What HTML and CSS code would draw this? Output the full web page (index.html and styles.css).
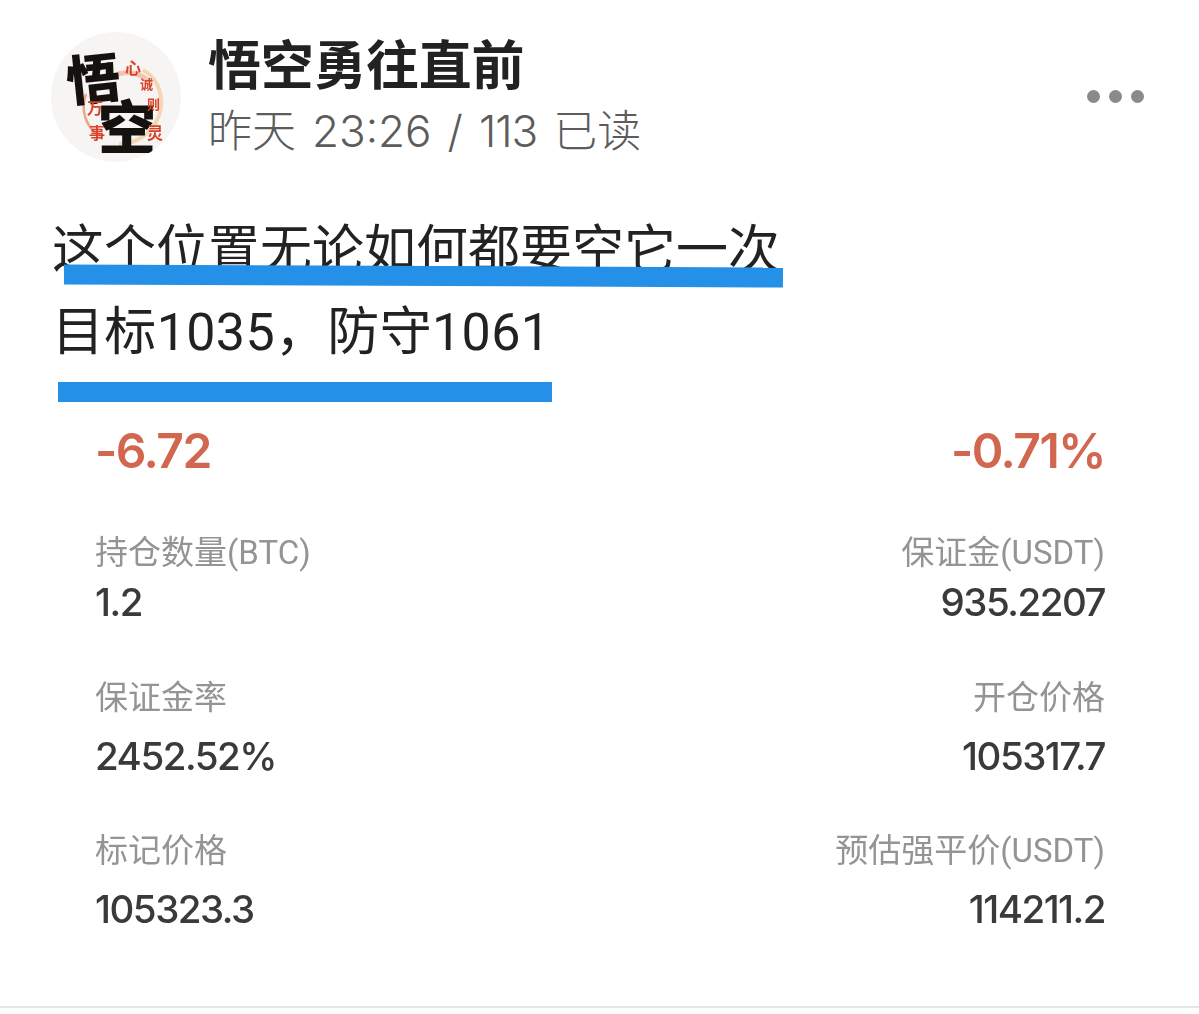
FILE: index.html
```html
<!DOCTYPE html>
<html lang="zh">
<head>
<meta charset="utf-8">
<title>悟空勇往直前</title>
<link rel="stylesheet" href="styles.css">
</head>
<body>
<main class="post">
  <header class="head">
    <div class="avatar">
      <svg class="swirl" viewBox="0 0 130 130" aria-hidden="true">
        <path d="M92 38c18 10 24 34 12 54-8 13-22 20-36 20" fill="none" stroke="#f3d6b8" stroke-width="4"/>
        <path d="M35 62c-6 16 0 34 14 42" fill="none" stroke="#efa585" stroke-width="2.5"/>
        <path d="M62 44c14-6 28-4 38 8" fill="none" stroke="#f5c4b0" stroke-width="5"/>
      </svg>
      <span class="av-wu">悟</span>
      <span class="av-kong">空</span>
      <span class="av-red av-xin">心</span>
      <span class="av-red av-small av-cheng">诚</span>
      <span class="av-red av-small av-ze">则</span>
      <span class="av-red av-ling">灵</span>
      <span class="av-red av-wan">万</span>
      <span class="av-red av-shi">事</span>
    </div>
    <div class="who">
      <div class="name">悟空勇往直前</div>
      <div class="meta"><span>昨天</span><span>23:26</span><span>/</span><span class="reads">113</span><span>已读</span></div>
    </div>
    <div class="more" aria-label="更多"><i></i><i></i><i></i></div>
  </header>

  <section class="body">
    <p class="line line-one">这个位置无论如何都要空它一次<span class="mark mark-one"></span></p>
    <p class="line line-two">目标1035，防守1061<span class="mark mark-two"></span></p>
  </section>

  <section class="card">
    <div class="pnl">
      <span>-6.72</span>
      <span>-0.71%</span>
    </div>
    <div class="row row-a">
      <div class="cell"><div class="label">持仓数量(BTC)</div><div class="value">1.2</div></div>
      <div class="cell end"><div class="label">保证金(USDT)</div><div class="value">935.2207</div></div>
    </div>
    <div class="row row-b">
      <div class="cell"><div class="label">保证金率</div><div class="value">2452.52%</div></div>
      <div class="cell end"><div class="label">开仓价格</div><div class="value">105317.7</div></div>
    </div>
    <div class="row row-c">
      <div class="cell"><div class="label">标记价格</div><div class="value">105323.3</div></div>
      <div class="cell end"><div class="label">预估强平价(USDT)</div><div class="value">114211.2</div></div>
    </div>
  </section>
  <div class="rule"></div>
</main>
</body>
</html>
```
FILE: styles.css
```css
* { box-sizing: border-box; }
html, body { margin: 0; background: #fff; }
body {
  width: 1199px;
  height: 1014px;
  overflow: hidden;
  font-family: Inter, "Noto Sans CJK SC", sans-serif;
  color: #222;
}
.post { display: flex; flex-direction: column; height: 1014px; }

.head { display: flex; align-items: flex-start; padding: 30px 55px 0 51px; }
.avatar {
  position: relative;
  flex: none;
  width: 130px;
  height: 130px;
  margin-top: 2px;
  border-radius: 50%;
  background: #f6f5f4;
  overflow: hidden;
  filter: blur(.5px);
}
.swirl { position: absolute; inset: 0; width: 130px; height: 130px; }
.avatar span { position: absolute; line-height: 1; font-family: "Noto Sans CJK SC", sans-serif; }
.av-wu { left: 15px; top: 17px; font-size: 54px; font-weight: 900; color: #15110f; transform: rotate(-6deg); }
.av-kong { left: 47px; top: 63px; font-size: 58px; font-weight: 900; color: #15110f; }
.av-red { font-size: 16px; font-weight: 700; color: #d8432a; }
.av-small { font-size: 13px; }
.av-xin { left: 74px; top: 27px; }
.av-cheng { left: 89px; top: 45px; }
.av-ze { left: 96px; top: 65px; }
.av-ling { left: 96px; top: 92px; }
.av-wan { left: 36px; top: 67px; }
.av-shi { left: 38px; top: 92px; }

.who { margin-left: 27px; flex: 1; }
.name { font-size: 53px; line-height: 64px; font-weight: 700; letter-spacing: -.3px; color: #222; font-family: "Noto Sans CJK SC", sans-serif; }
.meta { display: flex; gap: 16px; margin-top: 5px; font-size: 44px; line-height: 64px; font-weight: 300; color: #5c5c5c; white-space: nowrap; }
.reads { letter-spacing: -1px; }
.more { display: flex; gap: 9px; margin-top: 60px; }
.more i { width: 13px; height: 13px; border-radius: 50%; background: #8a8a8a; }

.body { padding: 43px 0 0 52px; }
.line { position: relative; margin: 0; font-size: 52px; line-height: 87px; white-space: nowrap; color: #222; }
.line-two { line-height: 79px; font-family: Roboto, "Noto Sans CJK SC", sans-serif; letter-spacing: .35px; }
.mark { position: absolute; height: 20px; background: #2490e8; }
.mark-one { left: 12px; top: 60px; width: 719px; transform: rotate(.24deg); }
.mark-two { left: 6px; top: 89px; width: 494px; }

.card { padding: 51px 94px 0 95px; filter: blur(.6px); }
.pnl { display: flex; justify-content: space-between; font-size: 48px; line-height: 56px; font-weight: 600; letter-spacing: -1.5px; color: #d2664f; }
.row { display: flex; justify-content: space-between; }
.row-a { margin-top: 52px; }
.row-b { margin-top: 50px; }
.row-c { margin-top: 49px; }
.cell { display: flex; flex-direction: column; }
.cell.end { align-items: flex-end; }
.label { font-family: Roboto, "Noto Sans CJK SC", sans-serif; font-size: 33px; line-height: 44px; color: #949494; }
.value { margin-top: 3px; font-size: 38.5px; line-height: 48px; font-weight: 500; color: #3a3a3a; letter-spacing: -1.5px; }
.row-b .value, .row-c .value { margin-top: 12px; }
.rule { margin-top: auto; height: 2px; margin-bottom: 6px; background: #e6e6e6; }
```
